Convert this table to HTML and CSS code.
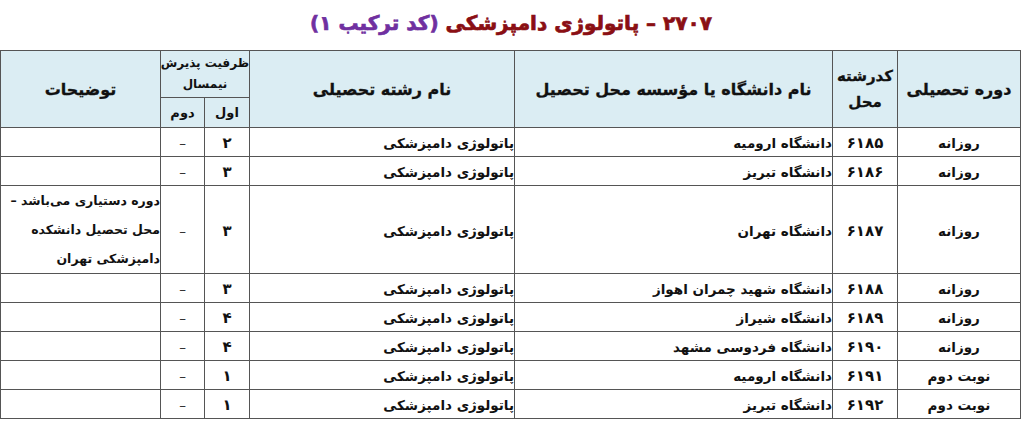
FILE: index.html
```html
<!DOCTYPE html>
<html lang="fa" dir="rtl">
<head>
<meta charset="utf-8">
<link rel="stylesheet" href="styles.css">
</head>
<body>
<h1 class="title"><span class="code">۲۷۰۷ – پاتولوژی دامپزشکی</span> <span class="combo">(کد ترکیب ۱)</span></h1>
<table class="grid">
<colgroup>
<col class="c-period"><col class="c-code"><col class="c-uni"><col class="c-field"><col class="c-first"><col class="c-second"><col class="c-notes">
</colgroup>
<thead>
<tr>
<th rowspan="2" class="h-big">دوره تحصیلی</th>
<th rowspan="2" class="h-code">کدرشته<br>محل</th>
<th rowspan="2" class="h-big">نام دانشگاه یا مؤسسه محل تحصیل</th>
<th rowspan="2" class="h-big">نام رشته تحصیلی</th>
<th colspan="2" class="h-cap">ظرفیت پذیرش<br>نیمسال</th>
<th rowspan="2" class="h-big">توضیحات</th>
</tr>
<tr>
<th class="h-sub">اول</th>
<th class="h-sub">دوم</th>
</tr>
</thead>
<tbody>
<tr><td class="ctr">روزانه</td><td class="ctr num">۶۱۸۵</td><td class="rt">دانشگاه ارومیه</td><td class="rt">پاتولوژی دامپزشکی</td><td class="ctr num">۲</td><td class="ctr dash">–</td><td class="rt"></td></tr>
<tr><td class="ctr">روزانه</td><td class="ctr num">۶۱۸۶</td><td class="rt">دانشگاه تبریز</td><td class="rt">پاتولوژی دامپزشکی</td><td class="ctr num">۳</td><td class="ctr dash">–</td><td class="rt"></td></tr>
<tr class="tall"><td class="ctr">روزانه</td><td class="ctr num">۶۱۸۷</td><td class="rt">دانشگاه تهران</td><td class="rt">پاتولوژی دامپزشکی</td><td class="ctr num">۳</td><td class="ctr dash">–</td><td class="rt notes">دوره دستیاری می‌باشد –<br>محل تحصیل دانشکده<br>دامپزشکی تهران</td></tr>
<tr><td class="ctr">روزانه</td><td class="ctr num">۶۱۸۸</td><td class="rt">دانشگاه شهید چمران اهواز</td><td class="rt">پاتولوژی دامپزشکی</td><td class="ctr num">۳</td><td class="ctr dash">–</td><td class="rt"></td></tr>
<tr><td class="ctr">روزانه</td><td class="ctr num">۶۱۸۹</td><td class="rt">دانشگاه شیراز</td><td class="rt">پاتولوژی دامپزشکی</td><td class="ctr num">۴</td><td class="ctr dash">–</td><td class="rt"></td></tr>
<tr><td class="ctr">روزانه</td><td class="ctr num">۶۱۹۰</td><td class="rt">دانشگاه فردوسی مشهد</td><td class="rt">پاتولوژی دامپزشکی</td><td class="ctr num">۴</td><td class="ctr dash">–</td><td class="rt"></td></tr>
<tr><td class="ctr">نوبت دوم</td><td class="ctr num">۶۱۹۱</td><td class="rt">دانشگاه ارومیه</td><td class="rt">پاتولوژی دامپزشکی</td><td class="ctr num">۱</td><td class="ctr dash">–</td><td class="rt"></td></tr>
<tr><td class="ctr">نوبت دوم</td><td class="ctr num">۶۱۹۲</td><td class="rt">دانشگاه تبریز</td><td class="rt">پاتولوژی دامپزشکی</td><td class="ctr num">۱</td><td class="ctr dash">–</td><td class="rt"></td></tr>
</tbody>
</table>
</body>
</html>
```

FILE: styles.css
```css
html, body {
  margin: 0;
  padding: 0;
  background: #ffffff;
}
body {
  font-family: "DejaVu Sans", sans-serif;
  color: #111;
  width: 1022px;
}
.title {
  margin: 0;
  height: 50px;
  line-height: 46px;
  text-align: center;
  font-size: 20px;
  font-weight: bold;
  -webkit-text-stroke: 0.7px currentColor;
}
.title .code { color: #8a0f14; }
.title .combo { color: #7030a0; }

.grid {
  border-collapse: collapse;
  table-layout: fixed;
  width: 1020px;
  margin-right: 1px;
}
.c-period { width: 123px; }
.c-code { width: 65px; }
.c-uni { width: 318px; }
.c-field { width: 265px; }
.c-first { width: 45px; }
.c-second { width: 44px; }
.c-notes { width: 160px; }

.grid th, .grid td {
  border: 1px solid #555;
  padding: 0;
  font-weight: bold;
  white-space: nowrap;
}
.grid th {
  background: #dbedf3;
  color: #111;
}
.h-big {
  font-size: 16px;
  padding-top: 6px;
  -webkit-text-stroke: 0.3px currentColor;
}
.h-code {
  font-size: 15px;
  line-height: 26px;
  -webkit-text-stroke: 0.3px currentColor;
}
.h-cap {
  font-size: 12px;
  line-height: 21px;
  height: 46px;
}
.h-sub {
  font-size: 13px;
  height: 29px;
}
.grid td {
  height: 26px;
  font-size: 13.5px;
  line-height: 18px;
  padding-top: 2px;
}
.grid td.num {
  font-size: 15px;
}
.ctr { text-align: center; }
.rt { text-align: right; }
.grid td.dash { font-weight: normal; color: #333; }
.grid .tall td { height: 84px; }
.grid .notes {
  line-height: 29px;
  padding-top: 0;
  font-size: 12.5px;
}
```
